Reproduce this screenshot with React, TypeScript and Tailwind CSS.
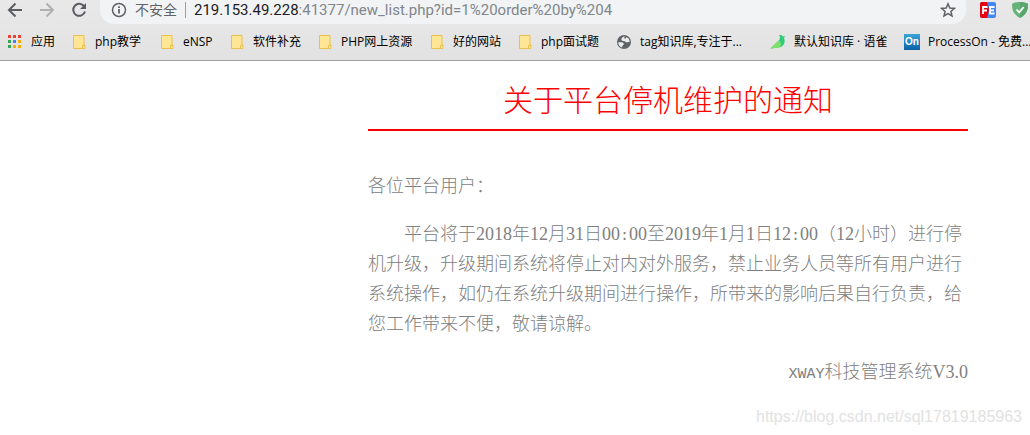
import type { ReactNode } from 'react';

const FolderIcon = () => (
  <svg viewBox="0 0 16 16" className="size-4 shrink-0" aria-hidden="true">
    <path d="M2.5 1.5h10.5v9.5h1v3.5h-11.5z" fill="#ffe694" stroke="#ecc04c" />
    <path d="M11.5 14.5v-3h2.5" fill="none" stroke="#ecc04c" />
  </svg>
);

const appColors = ['#ea4335', '#ea4335', '#ea4335', '#34a853', '#4285f4', '#fbab05', '#34a853', '#fbab05', '#fbab05'];

const AppsIcon = () => (
  <svg viewBox="0 0 15 16" className="h-4 w-[15px] shrink-0" aria-hidden="true">
    {appColors.map((color, i) => (
      <rect key={i} x={(i % 3) * 5} y={1 + Math.floor(i / 3) * 5} width="3" height="3" fill={color} />
    ))}
  </svg>
);

const GlobeIcon = () => (
  <svg viewBox="0 0 16 16" className="size-4 shrink-0" aria-hidden="true">
    <circle cx="8" cy="8" r="7" fill="#5f6368" />
    <path d="M8.6 2.300C6.800 2.800 5.400 4 5.400 5.400c0 1.300 1.300 1.400 2.700 1.500 1.200.1 1.400.5 1.400 1.300h2.200c.8 0 1.300-.6 2.100-.7a5.900 5.900 0 0 0-3.200-4.600L9.800 4.400H8.300z" fill="#ececec" />
    <path d="M2.200 8.200h3.200c1.500 0 2.400.7 2.400 2 0 .8-.8 1-1.300 1.100l-.3 2.300A5.900 5.900 0 0 1 2.200 8.200z" fill="#ececec" />
  </svg>
);

const BirdIcon = () => (
  <svg viewBox="0 0 16 16" className="size-4 shrink-0" aria-hidden="true">
    <path d="M9 1.300c1.500-.7 3-.2 3.600.9l2.600.4-1.300 1.300c2 4-.2 8.500-4.200 9.400-3 .8-6.400.6-9.200 1.500C3 11.600 6.200 9 9 6.200 10.200 4.600 10.200 2.600 9 1.300z" fill="#31cc79" />
    <path d="M.5 14.800C3 11.600 6.200 9 9 6.200c2.400 2.400 2.400 5.400.7 7.100-3 .8-6.400.6-9.200 1.500z" fill="#7fe06a" />
  </svg>
);

const OnIcon = () => (
  <span className="flex size-4 shrink-0 items-center justify-center bg-linear-to-b from-[#3aa5d8] to-[#0b62a8] font-['Liberation_Sans',sans-serif] text-[10px] leading-none font-bold text-white">
    On
  </span>
);

interface Bookmark {
  label: string;
  icon: ReactNode;
  width: string;
}

const bookmarks: Bookmark[] = [
  { label: '应用', icon: <AppsIcon />, width: 'w-6' },
  { label: 'php教学', icon: <FolderIcon />, width: 'w-12' },
  { label: 'eNSP', icon: <FolderIcon />, width: 'w-[30px]' },
  { label: '软件补充', icon: <FolderIcon />, width: 'w-12' },
  { label: 'PHP网上资源', icon: <FolderIcon />, width: 'w-18' },
  { label: '好的网站', icon: <FolderIcon />, width: 'w-12' },
  { label: 'php面试题', icon: <FolderIcon />, width: 'w-[59px]' },
  { label: 'tag知识库,专注于...', icon: <GlobeIcon />, width: 'w-[114px]' },
  { label: '默认知识库 · 语雀', icon: <BirdIcon />, width: 'w-[94px]' },
  { label: 'ProcessOn - 免费...', icon: <OnIcon />, width: 'w-[114px]' },
];

const BrowserBar = () => (
  <header className="overflow-hidden border-b border-[#a0a0a0] bg-linear-to-b from-[#e9e9e9] to-[#e2e2e2] font-['Open_Sans','Noto_Sans_CJK_SC',sans-serif]">
    <div className="flex h-6 items-center">
      <nav className="flex shrink-0 items-center gap-4 pr-[13px] pb-1 pl-[7px]">
        <button type="button" aria-label="后退" className="text-[#5a5d61]">
          <svg viewBox="0 0 16 16" className="size-4" fill="none" stroke="currentColor" strokeWidth="2">
            <path d="M15 8H2.500M8.500 1.500 2 8l6.500 6.500" />
          </svg>
        </button>
        <button type="button" aria-label="前进" className="text-[#aeb0b2]">
          <svg viewBox="0 0 16 16" className="size-4" fill="none" stroke="currentColor" strokeWidth="2">
            <path d="M1 8h12.500M7.500 1.500 14 8l-6.500 6.500" />
          </svg>
        </button>
        <button type="button" aria-label="重新加载" className="text-[#5a5d61]">
          <svg viewBox="0 0 16 16" className="size-4" fill="none" stroke="currentColor" strokeWidth="2">
            <path d="M13.200 4.400A6 6 0 1 0 14 9.500" />
            <path d="M15 1v6H9z" fill="currentColor" stroke="none" />
          </svg>
        </button>
      </nav>

      <div className="flex h-6 min-w-0 flex-1 items-center rounded-b-[14px] bg-[#f1f3f4] pr-2.5 pb-1 pl-[11px] leading-5">
        <button type="button" className="flex shrink-0 items-center gap-2 text-sm text-[#5f6368]">
          <svg viewBox="0 0 16 16" className="size-4" fill="none" stroke="currentColor" strokeWidth="1.500" aria-hidden="true">
            <circle cx="8" cy="8" r="6.500" />
            <path d="M8 7v4.500M8 4.300v1.600" strokeWidth="1.800" />
          </svg>
          不安全
        </button>
        <span className="mx-2 h-4 w-px shrink-0 bg-[#9aa0a6]" />
        <div className="flex min-w-0 flex-1 items-center font-['Roboto',sans-serif] text-[15px]">
          <label htmlFor="address" className="shrink-0 text-[#202124]">219.153.49.228</label>
          <input
            id="address"
            type="text"
            defaultValue=":41377/new_list.php?id=1%20order%20by%204"
            className="min-w-0 flex-1 bg-transparent text-[#80868b] outline-none"
          />
        </div>
        <button type="button" aria-label="收藏" className="shrink-0 text-[#5f6368]">
          <svg viewBox="0 0 16 16" className="size-4" fill="none" stroke="currentColor" strokeWidth="1.500">
            <path d="m8 1.800 1.800 4.200 4.600.4-3.500 3 1.100 4.500L8 11.500l-4 2.400 1.100-4.500-3.500-3L6.200 6z" />
          </svg>
        </button>
      </div>

      <div className="flex shrink-0 items-center gap-4 pr-0.5 pb-1 pl-3.5">
        <button type="button" aria-label="FE" className="size-4">
          <svg viewBox="0 0 16 16" className="size-4">
            <rect width="16" height="16" rx="2" fill="#4387f0" />
            <path d="M2 0h5l2 8-2 8H2a2 2 0 0 1-2-2V2a2 2 0 0 1 2-2z" fill="#e60012" />
            <path d="M3 12V5h4.500M3 8.500h4M14.500 5H10v6.500h4.500M10 8.300h4" fill="none" stroke="#fff" strokeWidth="1.800" />
          </svg>
        </button>
        <button type="button" aria-label="AdGuard" className="size-4">
          <svg viewBox="0 0 16 16" className="size-4">
            <path d="M8 0c2.500 0 5.500.6 8 1.800 0 5-.6 10.400-8 14.200C.6 12.200 0 6.800 0 1.800 2.500.6 5.500 0 8 0z" fill="#67b279" />
            <path d="M8 0c2.500 0 5.500.6 8 1.800 0 5-.6 10.400-8 14.200z" fill="#5aa56c" />
            <path d="m4.500 7.500 2.700 2.800 4.500-5.300" fill="none" stroke="#fff" strokeWidth="1.800" />
          </svg>
        </button>
      </div>
    </div>

    <nav className="flex h-9 items-center gap-4 pl-2">
      {bookmarks.map((item) => (
        <a key={item.label} href="#" className="flex shrink-0 items-center gap-2 text-xs text-black">
          {item.icon}
          <span className={`${item.width} whitespace-nowrap`}>{item.label}</span>
        </a>
      ))}
    </nav>
  </header>
);

// half-width characters take exactly half of an 18px Chinese character
const Half = ({ children }: { children: ReactNode }) => (
  <span className="font-['Liberation_Mono',monospace] text-[15px] leading-none">{children}</span>
);

const Num = ({ children }: { children: ReactNode }) => (
  <span className="font-['Liberation_Serif',serif] leading-none">{children}</span>
);

const Notice = () => (
  <main className="pr-[62px] pl-[368px]">
    <article className="flex max-w-[600px] flex-col gap-[18px] text-lg leading-[30px] font-light text-[#808080]">
      <h1 className="mb-5 border-b-2 border-[#f00] pt-[22px] pb-4 text-center text-[30px] leading-[30px] font-light text-[#f00]">
        关于平台停机维护的通知
      </h1>
      <p>各位平台用户：</p>
      <p className="indent-9">
        平台将于<Num>2018</Num>年<Num>12</Num>月<Num>31</Num>日<Num>00<Half>:</Half>00</Num>至<Num>2019</Num>年<Num>1</Num>月<Num>1</Num>日<Num>12<Half>:</Half>00</Num>（<Num>12</Num>小时）进行停机升级，升级期间系统将停止对内对外服务，禁止业务人员等所有用户进行系统操作，如仍在系统升级期间进行操作，所带来的影响后果自行负责，给您工作带来不便，敬请谅解。
      </p>
      <p className="text-right">
        <Half>XWAY</Half>科技管理系统<Num>V3.0</Num>
      </p>
    </article>
  </main>
);

export default function App() {
  return (
    <div lang="zh-CN" className="bg-white font-['Noto_Sans_CJK_SC',sans-serif]">
      <BrowserBar />
      <Notice />
      <footer className="mt-5 pr-2 text-right font-['Liberation_Sans',sans-serif] text-base leading-6 text-[#e2e2e2]">
        https://blog.csdn.net/sql17819185963
      </footer>
    </div>
  );
}
